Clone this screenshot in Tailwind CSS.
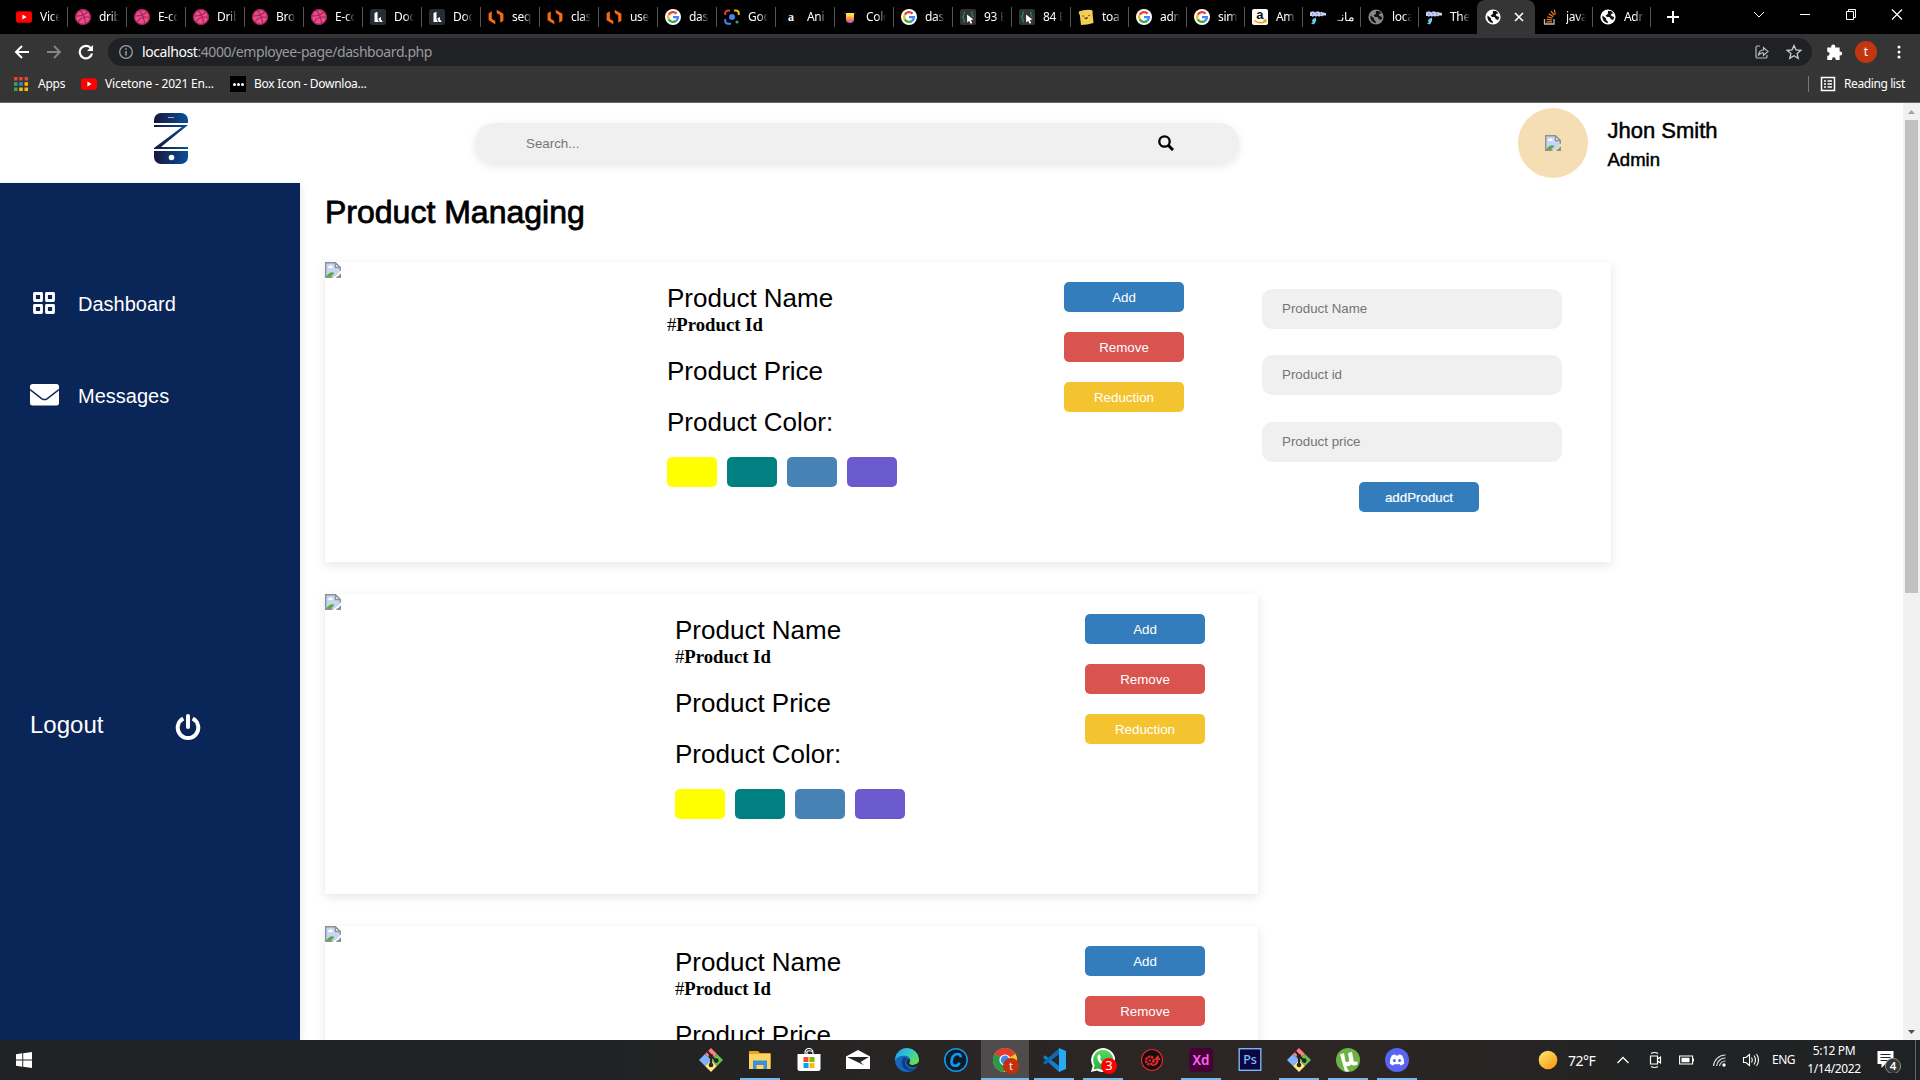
<!DOCTYPE html>
<html lang="en">
<head>
<meta charset="utf-8">
<title>Dashboard</title>
<script src="https://cdn.jsdelivr.net/npm/@tailwindcss/browser@4"></script>
</head>
<body class="w-[1920px] h-[1080px] overflow-hidden bg-white font-['Liberation_Sans',Arial,sans-serif] text-black">
<svg class="absolute size-0">
  <defs>
    <linearGradient id="gz"><stop stop-color="#17173a"/><stop offset="1" stop-color="#0a4f98"/></linearGradient>
    <linearGradient id="gsun" x2="0.8" y2="1"><stop stop-color="#ffe873"/><stop offset="1" stop-color="#fb9a14"/></linearGradient>
    <linearGradient id="gedge" x2="1" y2="0.5"><stop stop-color="#1b9de2"/><stop offset=".5" stop-color="#2fc3d0"/><stop offset="1" stop-color="#5ee05a"/></linearGradient>
    <linearGradient id="gcol" x2="0" y2="1"><stop offset=".2" stop-color="#ffe14d"/><stop offset=".6" stop-color="#ff8a3c"/><stop offset="1" stop-color="#c04bd8"/></linearGradient>
    <linearGradient id="gwa" x2="0" y2="1"><stop stop-color="#5fd668"/><stop offset="1" stop-color="#20b038"/></linearGradient>
  </defs>
</svg>
<svg class="hidden">
  <symbol id="yt" viewBox="0 0 16 16"><rect y="2.3" width="16" height="11.4" rx="2.8" fill="#f00"/><path d="M6.4 5.6v4.8L10.6 8z" fill="#fff"/></symbol>
  <symbol id="dribbble" viewBox="0 0 16 16"><circle cx="8" cy="8" r="7.8" fill="#ea4c89"/><g fill="none" stroke="#a3245a" stroke-width="1.1"><circle cx="8" cy="8" r="7.4"/><path d="M5.2 1.2c3 3.6 4.8 8.200 5.500 13.300M.8 7c5.600.1 9.600-1.200 12-4.400M3 13.200C5.200 9 9.500 7.200 15.200 8.300"/></g></symbol>
  <symbol id="lucid" viewBox="0 0 16 16"><rect width="16" height="16" rx="2.500" fill="#282c33"/><path d="M4.500 4 7.500 2.800V10L9 13H4.500zM8.300 9.500 11 8v2.500l1.800 2.500H9.800z" fill="#fff"/></symbol>
  <symbol id="hexo" viewBox="0 0 16 16"><path d="M3.800 2.300v7.400L7.300 12v3.300L.6 11.300V4.300zM8.700.7l6.700 4v7l-3.200 2V6.300L8.700 4z" fill="#f96b13"/></symbol>
  <symbol id="google" viewBox="0 0 16 16"><circle cx="8" cy="8" r="8" fill="#fff"/><g fill="none" stroke-width="2.300"><path d="M11.600 4.600A4.900 4.900 0 0 0 3.700 5.700" stroke="#ea4335"/><path d="M3.700 5.700a4.900 4.900 0 0 0 0 4.700" stroke="#fbbc05"/><path d="M3.700 10.400a4.900 4.900 0 0 0 7.600 1.200" stroke="#34a853"/><path d="M8 8.200h4.900a4.900 4.900 0 0 1-1.600 3.400" stroke="#4285f4"/></g></symbol>
  <symbol id="lens" viewBox="0 0 16 16"><g fill="none" stroke-width="2"><path d="M1.200 6V4.500a3 3 0 0 1 3-3H6" stroke="#ea4335"/><path d="M10 1.500h1.800a3 3 0 0 1 3 3V6" stroke="#fbbc05"/><path d="M1.200 10v1.800a3 3 0 0 0 3 3H7" stroke="#4285f4"/></g><circle cx="8" cy="8" r="3" fill="#4285f4"/><circle cx="13" cy="13" r="1.600" fill="#34a853"/></symbol>
  <symbol id="letter-a" viewBox="0 0 16 16"><rect width="16" height="16" rx="2" fill="#060606"/><text x="8" y="11.500" text-anchor="middle" font-family="Liberation Serif" font-weight="700" font-size="12" fill="#fff">a</text></symbol>
  <symbol id="colorhunt" viewBox="0 0 16 16"><path d="M2 3.500 4 5M14 3.500 12 5" stroke="#333"/><path d="M4 4h8v6a4 4 0 0 1-8 0z" fill="url(#gcol)"/></symbol>
  <symbol id="codepen" viewBox="0 0 16 16"><rect width="16" height="16" rx="2" fill="#333"/><path d="M5 3c-1.500 0-1 2-1.200 3.500L2.500 8l1.300 1.500C4 11 3.500 13 5 13M11 3c1.500 0 1 2 1.200 3.500L13.500 8" fill="none" stroke="#1e8a4a" stroke-width="1.300"/><path d="M7 5.500l6.500 5-2.700.4 1.400 3-1.600.8-1.400-3L7.200 13.500z" fill="#fff"/></symbol>
  <symbol id="toast" viewBox="0 0 16 16"><path d="M1 2.500Q7 0 13.500 1q2 1 1 3l1 10Q9 16 3 16L1.800 6Q0 4 1 2.500z" fill="#f3cf55"/><path d="M5 7h.1M11 6.500h.1M7 9q1.200 1 2.200-.2" stroke="#5b4316" stroke-width="1.400" stroke-linecap="round" fill="none"/></symbol>
  <symbol id="amazon" viewBox="0 0 16 16"><rect width="16" height="16" rx="2" fill="#fff"/><text x="7.800" y="9.600" text-anchor="middle" font-family="Liberation Sans" font-weight="700" font-size="13" fill="#111">a</text><path d="M2 11.500q5.500 4 11 .8M11.500 11.300l2.500-.1-.6 2.300" fill="none" stroke="#f90" stroke-width="1.400"/></symbol>
  <symbol id="mana" viewBox="0 0 16 16"><path d="M0 3.500 1.500 2.500H4l1 1 1.500-1H9l1 1 1.500-.8L13 3.500l3 .5v2.500h-3l-1 1-1.500-.8L9 7.700 7.500 6.800 6 7.700 4.500 6.800 3 7.700 1.500 7H0z" fill="#ccd3f5"/><path d="M2 5h1.500M6 4.800h1.500M10 5h1.500" stroke="#5566b8"/><path d="M3 10 6 8.500 6 12 4 15.500 1 14.500l2-1.500-1.200-1z" fill="#6fcdf2"/></symbol>
  <symbol id="globe" viewBox="0 0 16 16"><circle cx="8" cy="8" r="7.600" fill="currentColor"/><path d="M2.500 6.500 6 9.300v1.400l1.800 1.800v1.800A6.300 6.300 0 0 1 2.500 6.500zM8 2l3-.1 2.500 2.300-2 .6-.8 1.500 1.800 1.300 1.700.4-1 3-2.200-.8L9.500 8H7L5.500 6.500 7.800 5z" fill="#111"/></symbol>
  <symbol id="so" viewBox="0 0 16 16"><path d="M2.500 10v5h9.500v-5" fill="none" stroke="#bcbbbb" stroke-width="1.300"/><path d="M4.500 12.800h5.500M4.600 10.400l5.400.6M5.200 7.700l5.200 1.600M6.800 4.800l4.500 3M9 2l3.300 4.300M12.300.5l1 5" stroke="#f48024" stroke-width="1.200"/></symbol>
  <symbol id="broken" viewBox="0 0 16 16"><path d="M.7.700h9.800l4.800 4.800v4L9 15.300H.7z" fill="#c5d6f4"/><path d="M1 14.800Q5 8.500 9.500 11l-4 4.300H1z" fill="#5aad3c"/><path d="M12 15.300l3.300-3v3z" fill="#5aad3c"/><path d="M2.500 6q0-1.500 1.700-1.500Q5.500 2 7 4.500 8.500 4.700 8.300 6z" fill="#fff"/><path d="M10.500.7v4.800h4.800z" fill="#fff"/><path d="M7.500 15.300H.7V.7h9.800l4.800 4.800v3.300M10.500.7v4.800h4.800M11.500 15.300h3.800v-3.500" fill="none" stroke="#8f9093" stroke-width="1.400"/></symbol>
  <symbol id="git" viewBox="0 0 24 24"><path d="M12 0l6 6-6 6-6-6z" fill="#ff7f7f"/><path d="M6 6l6 6-6 6-6-6z" fill="#80b3ff"/><path d="M18 6l6 6-6 6-6-6z" fill="#6cc04a"/><path d="M12 12l6 6-6 6-6-6z" fill="#ffe680"/><path d="M8.500 3.500l3.500 4v10M12 8l5.500 5" stroke="#272425" stroke-width="2" fill="none"/><circle cx="12" cy="8.200" r="2.300" fill="#272425"/><circle cx="12" cy="17" r="2.300" fill="#272425"/><circle cx="17.300" cy="12.600" r="2.300" fill="#272425"/></symbol>
  <symbol id="folder" viewBox="0 0 24 24"><path d="M1 3h9l2 2h10.500v16H1z" fill="#e8a317"/><path d="M1 6h21.500v15H1z" fill="#fcd462"/><path d="M5 12.500h14V21h-3.500v-4h-7v4H5z" fill="#3a8fd8"/></symbol>
  <symbol id="store" viewBox="0 0 24 24"><path d="M8 6V4.500a4 4 0 0 1 8 0V6M10 6V3.500a4 3 0 0 1 5 0" fill="none" stroke="#fff" stroke-width="1.200"/><path d="M.5 6h23v14.500a2.500 2.500 0 0 1-2.500 2.500H3a2.500 2.500 0 0 1-2.500-2.500z" fill="#fff"/><path d="M6.500 9H11.500v5H6.500z" fill="#f25022"/><path d="M12.500 9h5v5h-5z" fill="#7fba00"/><path d="M6.500 15h5v5h-5z" fill="#00a4ef"/><path d="M12.500 15h5v5h-5z" fill="#ffb900"/></symbol>
  <symbol id="mail" viewBox="0 0 24 24"><path d="M0 8.500 12 2l12 6.500V21H0z" fill="#fff"/><path d="M1 9h22l-8.500 5 3.500 3.200z" fill="#252324"/></symbol>
  <symbol id="edge" viewBox="0 0 24 24"><circle cx="12" cy="12" r="12" fill="#1469bf"/><path d="M.3 9.500A12 12 0 0 1 24 11.500c0 4-3 5.500-6 5.500s-4.500-1-3.500-2.800c2-3-.5-6.500-5-6.500C5 7.700 2 9 .3 12.500z" fill="url(#gedge)"/><path d="M9.500 9c-3.500 2.500-4 8.500.5 12q5 3.500 11-.5-7 1.500-9.500-2.500c-2.200-3.300-1-6 .8-7z" fill="#0d3f86"/><path d="M12.300 11.500c-1.500 2.500-.5 5 1.500 6.500 3 2 7 1.500 9.200-.8L24 14q-2.500 3-6 3c-3 0-4.500-1-3.500-2.800.6-1 .4-2.200-.2-3.200z" fill="#252324"/></symbol>
  <symbol id="cc" viewBox="0 0 24 24"><circle cx="12" cy="12" r="11.200" fill="#0c1d29" stroke="#0d9cf0" stroke-width="1.500"/><path d="M16.800 9.300q0-3.300-3.500-3.300c-3.800 0-5.800 4-5.800 7.500 0 3.200 1.700 4.300 3.800 4.300 2.200 0 3.500-1 4.200-3" fill="none" stroke="#0d9cf0" stroke-width="2.600"/></symbol>
  <symbol id="chrome" viewBox="0 0 24 24"><circle cx="12" cy="12" r="12" fill="#fbc116"/><path d="M12 12 1.600 6A12 12 0 0 1 22.400 6z" fill="#e33b2e"/><path d="M1.600 6A12 12 0 0 0 11 24l5-9.500-4-2.500z" fill="#269a49"/><path d="M22.400 6A12 12 0 0 1 11 24l6-9.500z" fill="#fbc116"/><circle cx="12" cy="12" r="5.600" fill="#fff"/><circle cx="12" cy="12" r="4.400" fill="#4285f4"/></symbol>
  <symbol id="vsc" viewBox="0 0 24 24"><path d="M17 0v24L1 9.500 3 7.300 17 17.700z" fill="#1080c8"/><path d="M17.500 0 1 14.500 3 16.700 17.500 6z" fill="#0a6db0"/><path d="M17 0l7 3v18l-7 3z" fill="#29aaf2"/></symbol>
  <symbol id="wa" viewBox="0 0 24 24"><path d="M0 24l1.700-6A12 12 0 1 1 6 22.400z" fill="#fff"/><path d="M2.500 21.500l1.200-4.300a10 10 0 1 1 3.300 3.200z" fill="url(#gwa)"/><path d="M8.500 6.300 10 9.500 9 11q1.500 3 4.500 4.200l1.300-1.500 3 1.500q-.3 3-3.600 2.800C9.500 17 6 12.500 6.500 8.500q.5-2 2-2.200z" fill="#fff"/></symbol>
  <symbol id="gear" viewBox="0 0 24 24"><circle cx="12" cy="12" r="10.500" fill="#130f10" stroke="#e0262c" stroke-width="1.200"/><circle cx="9.800" cy="12.500" r="3.800" fill="none" stroke="#e0262c" stroke-width="2.600" stroke-dasharray="2.400 .7"/><circle cx="9.800" cy="12.500" r="1.200" fill="#e0262c"/><path d="M12 16.500q4 0 4.300-4.500H14l3.800-5 3 5h-2.300q0 6-6.500 6z" fill="#e0262c"/></symbol>
  <symbol id="xd" viewBox="0 0 24 24"><rect width="24" height="24" rx="4" fill="#470137"/><text x="12" y="16.500" text-anchor="middle" font-family="Noto Sans" font-weight="600" font-size="13.500" fill="#ff61f6">Xd</text></symbol>
  <symbol id="ps" viewBox="0 0 24 24"><rect x="1.200" y=".7" width="21.600" height="21.600" fill="#0c0541" stroke="#74b8f8" stroke-width="1.400"/><text x="12" y="16" text-anchor="middle" font-family="Noto Sans" font-weight="500" font-size="12.500" fill="#7cc0ff">Ps</text></symbol>
  <symbol id="ut" viewBox="0 0 24 24"><circle cx="12" cy="12" r="12" fill="#6db344"/><path d="M4 6.500 8 5l1.300 7.500c.5 2.500 4.200 2 3.800-1L12 5l4-1.300 1.500 8.500q.5 2 2.500 1.500l1.500-.3v3q-4 2-6 0-2.500 2.500-5.500 1.500l3 5.500H9z" fill="#fff"/></symbol>
  <symbol id="dc" viewBox="0 0 24 24"><circle cx="12" cy="12" r="12" fill="#5865f2"/><path d="M6.800 7.500Q9 6.300 10.200 6.500l.5.900h2.600l.5-.9q1.200-.2 3.400 1 2.200 3.500 2 8-1.500 1.600-3.700 1.900l-.9-1.400q-2.600.7-5.200 0l-.9 1.400q-2.200-.3-3.700-1.900-.2-4.500 2-8z" fill="#fff"/><circle cx="9.400" cy="12.500" r="1.500" fill="#5865f2"/><circle cx="14.600" cy="12.500" r="1.500" fill="#5865f2"/></symbol>
</svg>

<div class="flex flex-col w-[1920px] h-[1080px]">
  <!-- Tab strip -->
  <div class="flex h-[34px] shrink-0 bg-black pl-[9px] font-['Noto_Sans',sans-serif] text-[12px] text-white">
    <div id="tabs" class="flex"></div>
    <svg class="ml-3.5 mt-[9px] size-4" viewBox="0 0 16 16"><path d="M8 2v12M2 8h12" stroke="#fff" stroke-width="2"/></svg>
    <div class="ml-auto flex pr-[15px] pt-[7px] gap-[30px] text-white">
      <svg class="size-4" viewBox="0 0 16 16"><path d="M3 5l5 5 5-5" fill="none" stroke="#fff"/></svg>
      <svg class="size-4" viewBox="0 0 16 16"><path d="M3 7.500h10" stroke="#fff"/></svg>
      <svg class="size-4" viewBox="0 0 16 16"><path d="M3.500 4.500h7v8h-7zM5.500 4.500v-2h7v8h-2" fill="none" stroke="#fff"/></svg>
      <svg class="size-4" viewBox="0 0 16 16"><path d="M3 2.500l10 10M13 2.500l-10 10" stroke="#fff" stroke-width="1.200"/></svg>
    </div>
  </div>
  <!-- Toolbar -->
  <div class="flex h-[34px] shrink-0 items-center bg-[#353535] pl-[14px] pr-[14px] pt-0.5 font-['Noto_Sans',sans-serif]">
    <svg class="size-4 mr-4" viewBox="0 0 16 16"><path d="M15 8H2M8 2L2 8l6 6" fill="none" stroke="#fff" stroke-width="2"/></svg>
    <svg class="size-4 mr-4" viewBox="0 0 16 16"><path d="M1 8h13M8 2l6 6-6 6" fill="none" stroke="#858585" stroke-width="1.800"/></svg>
    <svg class="size-4 mr-[14px]" viewBox="0 0 16 16"><path d="M13 4.500A6.200 6.200 0 1 0 14 9.500" fill="none" stroke="#fff" stroke-width="2.200"/><path d="M15 1v6H9z" fill="#fff"/></svg>
    <div class="flex h-7 w-[1704px] items-center rounded-full bg-[#202124] pl-[10px] pr-[10px]">
      <svg class="size-4 mr-2" viewBox="0 0 16 16"><circle cx="8" cy="8" r="6.300" fill="none" stroke="#9aa0a6" stroke-width="1.300"/><path d="M8 7v4.500M8 4.300v1.500" stroke="#9aa0a6" stroke-width="1.500"/></svg>
      <span class="text-[14px] leading-5 text-[#9a9a9a] tracking-[-0.42px]"><span class="text-white">localhost</span>:4000/employee-page/dashboard.php</span>
      <svg class="ml-auto size-4" viewBox="0 0 16 16"><path d="M6 2H3.500A1.500 1.500 0 0 0 2 3.500v9A1.500 1.500 0 0 0 3.500 14h8a1.500 1.500 0 0 0 1.500-1.500V11M4.500 11q.5-5 5-5V3.500L14 7.500l-4.500 4V9q-3-.3-5 2z" fill="none" stroke="#bbb" stroke-width="1.200"/></svg>
      <svg class="ml-4 size-4" viewBox="0 0 16 16"><path d="M8 1.500l2 4.500 4.800.4-3.700 3.200 1.200 4.800L8 11.800l-4.300 2.600 1.200-4.800L1.200 6.400 6 6z" fill="none" stroke="#ccc" stroke-width="1.300"/></svg>
    </div>
    <svg class="ml-[13px] size-[18px]" viewBox="0 0 16 16"><path d="M2 4h3.500V3.200a1.800 1.800 0 0 1 3.600 0V4H13v3.500h.5a1.800 1.800 0 0 1 0 3.600H13V15H9.500v-.8a1.600 1.600 0 0 0-3.200 0v.8H2v-3.700h.8a1.700 1.700 0 0 0 0-3.300H2z" fill="#fff"/></svg>
    <div class="ml-3 flex size-[22px] items-center justify-center rounded-full bg-[#c2370f] text-[12px] text-white">t</div>
    <svg class="ml-auto size-4" viewBox="0 0 16 16"><path d="M9 3h.01M9 8h.01M9 13h.01" stroke="#fff" stroke-width="3" stroke-linecap="round"/></svg>
  </div>
  <!-- Bookmarks -->
  <div class="flex h-[35px] shrink-0 items-center border-b border-[#666] bg-[#353535] px-[14px] pb-0.5 font-['Noto_Sans',sans-serif] text-[12px] tracking-[-0.25px] text-white">
    <svg class="size-[14px]" viewBox="0 0 14 14"><path d="M0 0h3.500v3.500H0zM5.200 0h3.500v3.500H5.200zM10.500 0H14v3.500h-3.500z" fill="#ea4335"/><path d="M0 5.200h3.500v3.500H0zM0 10.500h3.500V14H0z" fill="#34a853"/><path d="M5.200 5.200h3.500v3.500H5.200z" fill="#2f86f6"/><path d="M10.500 5.200H14v3.500h-3.500zM5.200 10.500h3.500V14H5.200zM10.500 10.500H14V14h-3.500z" fill="#fbbc05"/></svg>
    <span class="ml-[10px] w-[28px] whitespace-nowrap">Apps</span>
    <svg class="ml-[15px] size-4"><use href="#yt"/></svg>
    <span class="ml-2 w-[109px] whitespace-nowrap tracking-[-0.2px]">Vicetone - 2021 En...</span>
    <span class="ml-4 flex size-4 items-center justify-center gap-px bg-black"><i class="size-[3px] rounded-full bg-white"></i><i class="size-[3px] rounded-full bg-white"></i><i class="size-[3px] rounded-full bg-white"></i></span>
    <span class="ml-2 whitespace-nowrap tracking-[-0.28px]">Box Icon - Downloa...</span>
    <span class="ml-auto h-4 w-px bg-[#777]"></span>
    <svg class="ml-[11px] size-4" viewBox="0 0 16 16"><path d="M1.500 1.500h13v13h-13zM4 5h2M4 8h2M4 11h2M7.500 5H12M7.500 8H12M7.500 11H12" fill="none" stroke="#fff" stroke-width="1.500"/></svg>
    <span class="ml-2 w-[62px] whitespace-nowrap tracking-[-0.4px]">Reading list</span>
  </div>

  <!-- Page viewport -->
  <div class="flex h-[937px] shrink-0 overflow-hidden">
    <div class="flex w-[1903px] flex-col bg-white">
      <header class="flex h-20 shrink-0 items-center">
        <div class="w-[475px] shrink-0 pl-[153px] pb-2">
          <svg class="h-[52px] w-9" viewBox="0 0 36 52"><path d="M1 10V7a7 7 0 0 1 7-7h20a7 7 0 0 1 7 7v3zM1 38h34v6a7 7 0 0 1-7 7H8a7 7 0 0 1-7-7z" fill="url(#gz)"/><path d="M1 12h34L8 34h27v2H1v-1L29 14H1z" fill="url(#gz)"/><path d="M15 4.500h6" stroke="#aab"/><circle cx="18.500" cy="44.500" r="2.800" fill="#fff"/></svg>
        </div>
        <div class="flex h-10 w-[764px] shrink-0 items-center rounded-full bg-[#f0f0f0] pl-[51px] pr-[65px] shadow-[0_3px_10px_rgba(0,0,0,0.1)]">
          <span class="pt-0.5 text-[13.33px] text-[#757575]">Search...</span>
          <svg class="ml-auto size-4" viewBox="0 0 16 16"><circle cx="6.500" cy="6.500" r="5.200" fill="none" stroke="#000" stroke-width="2.300"/><path d="M10 10l5 5" stroke="#000" stroke-width="3"/></svg>
        </div>
        <div class="ml-[279px] flex size-[70px] items-center justify-center rounded-full bg-[#f5deb3]"><svg class="size-4"><use href="#broken"/></svg></div>
        <div class="ml-[19.5px] [-webkit-text-stroke:0.5px]">
          <div class="mt-1 text-[22px] leading-[28px]">Jhon Smith</div>
          <div class="text-[18.5px] leading-[29px]">Admin</div>
        </div>
      </header>
      <div class="flex h-[857px] shrink-0">
        <aside class="w-[300px] shrink-0 bg-[#0a2558] text-white shadow-[0_3px_10px_rgba(0,0,0,0.1)]">
          <div class="mt-[106px] flex h-7 items-center pl-[30px] text-[20px]">
            <svg class="w-7 h-6 mr-5" viewBox="0 0 28 24"><path d="M4.500 2.500h7v7h-7zM16.500 2.500h7v7h-7zM4.500 14.500h7v7h-7zM16.500 14.500h7v7h-7z" fill="none" stroke="#fff" stroke-width="2.800" stroke-linejoin="round"/></svg>
            <span class="pt-0.5">Dashboard</span>
          </div>
          <div class="mt-16 flex h-7 items-center pl-[30px] text-[20px]">
            <svg class="w-[29px] h-[22px] mr-[19px]" viewBox="0 0 29 22"><rect width="29" height="21.500" rx="2.500" fill="#fff"/><path d="M0 5.500l12 9.300q2.500 1.500 5 0L29 5.500" fill="none" stroke="#0a2558" stroke-width="1.400"/></svg>
            <span class="pt-px">Messages</span>
          </div>
          <div class="mt-[302px] flex h-7 items-center pl-[30px] text-[24px]">
            <span class="w-[145px]">Logout</span>
            <svg class="mt-1 size-[26px]" viewBox="0 0 26 26"><path d="M8.300 4.500a10.300 10.300 0 1 0 9.400 0" fill="none" stroke="#fff" stroke-width="4"/><path d="M13 2v11" stroke="#fff" stroke-width="4" stroke-linecap="round"/></svg>
          </div>
        </aside>
        <main class="flex flex-col pl-[25px] pt-[10px]">
          <h1 class="h-[69px] shrink-0 text-[32px] leading-[38px] [-webkit-text-stroke:0.8px]">Product Managing</h1>
          <div id="cards" class="flex flex-col gap-8"></div>
        </main>
      </div>
    </div>
    <!-- Scrollbar -->
    <div class="flex w-[17px] flex-col items-center bg-[#f1f1f1]">
      <svg class="h-[17px] w-[17px] shrink-0" viewBox="0 0 17 17"><path d="M5 11l3.500-4L12 11z" fill="#a3a3a3"/></svg>
      <div class="h-[473px] w-[13px] bg-[#c1c1c1]"></div>
      <svg class="mt-auto h-[17px] w-[17px] shrink-0" viewBox="0 0 17 17"><path d="M5 7l3.500 4L12 7z" fill="#505050"/></svg>
    </div>
  </div>

  <!-- Taskbar -->
  <footer class="flex h-10 shrink-0 bg-[linear-gradient(90deg,#1f2123_0%,#202223_30%,#2a2524_50%,#2d2625_70%,#222324_85%,#1f2123_100%)] font-['Noto_Sans',sans-serif] text-[12px] text-white">
    <div class="flex w-[687px] shrink-0 items-center pl-4">
      <svg class="size-4" viewBox="0 0 16 16"><path d="M0 2.200l6.300-.9v6.200H0zM7.200 1.200 16 0v7.500H7.200zM0 8.400h6.300v6.300L0 13.800zM7.200 8.400H16V16l-8.800-1.200z" fill="#fff"/></svg>
    </div>
    <div id="tasks" class="flex"></div>
    <div class="ml-auto flex items-center">
      <svg class="size-5 mr-[10px]" viewBox="0 0 20 20"><circle cx="10" cy="10" r="9.300" fill="url(#gsun)"/></svg>
      <span class="w-[48px] text-[14px] tracking-[-0.5px]">72°F</span>
      <svg class="w-[14px] h-4 mr-[18px]" viewBox="0 0 14 16"><path d="M1.500 11 7 5.500l5.500 5.500" fill="none" stroke="#fff" stroke-width="1.300"/></svg>
      <svg class="w-4 h-[18px] mr-[15px]" viewBox="0 0 16 18"><path d="M2.500 5h7v8h-7zM9.500 8l3-2v6l-3-2M3 2.500q3.500-2 7 0M3 15.500q3.500 2 7 0" fill="none" stroke="#fff" stroke-width="1.200"/></svg>
      <svg class="w-4 h-4 mr-[17px]" viewBox="0 0 16 16"><path d="M.6 4h13v8H.6z" fill="none" stroke="#fff" stroke-width="1.100"/><path d="M2.500 5.700h8v4.600h-8zM13.600 6.500H15v3h-1.400z" fill="#fff"/></svg>
      <svg class="size-4 mr-[14px]" viewBox="0 0 16 16"><g fill="none" stroke="#ddd" stroke-width="1.200"><path d="M1.500 14A12 12 0 0 1 13.500 3M4.500 14a9 9 0 0 1 9-8M7.500 14a6 6 0 0 1 6-5"/></g><circle cx="12" cy="13" r="1.700" fill="#fff"/></svg>
      <svg class="w-[18px] h-4 mr-[12px]" viewBox="0 0 18 16"><path d="M1.500 5.500h2.500l3.500-3v11L4 10.500H1.500zM9.500 5.500q1.500 2.500 0 5M12 3.500q3 4.500 0 9M14.500 2q4 6 0 12" fill="none" stroke="#fff" stroke-width="1.100"/></svg>
      <span class="w-[33px] tracking-[-0.5px]">ENG</span>
      <div class="w-[58px] whitespace-nowrap text-center leading-[18px] tracking-[-0.4px]"><div>5:12 PM</div><div>1/14/2022</div></div>
      <svg class="ml-[14px] h-[26px] w-[26px]" viewBox="0 0 26 26"><path d="M.5 4h16v13h-8l-4 4v-4h-4z" fill="#fff"/><path d="M3.500 7.500h10M3.500 10.500h10M3.500 13.500h7" stroke="#222" stroke-width="1.200"/><circle cx="16" cy="19" r="7.600" fill="#333536" stroke="#8a8a8a"/><text x="16" y="23" text-anchor="middle" font-size="11.500" font-weight="600" fill="#fff">4</text></svg>
      <span class="ml-[12px] mr-1 h-10 w-px bg-[#666]"></span>
    </div>
  </footer>
</div>

<script>
  const tabs = [
    ['yt','Vice'],['dribbble','drib'],['dribbble','E-co'],['dribbble','Drib'],['dribbble','Bro'],['dribbble','E-co'],
    ['lucid','Doc'],['lucid','Doc'],['hexo','seq'],['hexo','clas'],['hexo','use'],['google','das'],['lens','Goo'],
    ['letter-a','Ani'],['colorhunt','Colo'],['google','das'],['codepen','93 E'],['codepen','84 E'],['toast','toa'],
    ['google','adm'],['google','sim'],['amazon','Am'],['mana','مانـ'],['globe','loca'],['mana','The'],['globe',''],
    ['so','java'],['globe','Adm']
  ];
  document.getElementById('tabs').innerHTML = tabs.map(([icon, text], i) => {
    const width = i < 18 ? 'w-[59px]' : 'w-[58px]';
    if (i === 25) return `<div class="flex ${width} h-[34px] items-center rounded-t-lg bg-[#353535] pl-2">
      <svg class="size-4 shrink-0 text-white"><use href="#globe"/></svg>
      <svg class="ml-[13px] size-2.5" viewBox="0 0 10 10"><path d="M1 1l8 8M9 1l-8 8" stroke="#fff" stroke-width="1.600"/></svg></div>`;
    const tint = i === 23 ? 'text-[#888]' : 'text-white';
    const rtl = text[0] === 'م';
    const label = rtl
      ? `<span dir="rtl" class="ml-2 w-5 overflow-hidden whitespace-nowrap [mask-image:linear-gradient(270deg,#000_60%,transparent)]">${text}</span>`
      : `<span class="ml-2 w-5 overflow-hidden whitespace-nowrap tracking-[-0.3px] [mask-image:linear-gradient(90deg,#000_55%,transparent)]">${text}</span>`;
    const line = i === 24 ? 'bg-transparent' : 'bg-[#555]';
    return `<div class="flex ${width} h-[34px] items-center pl-[7px]">
      <svg class="size-4 shrink-0 ${tint}"><use href="#${icon}"/></svg>${label}
      <span class="ml-auto h-5 w-px ${line}"></span></div>`;
  }).join('');

  const button = (label, color) => `<button class="h-[30px] w-[120px] rounded-[5px] pt-0.5 ${color} text-[13.33px] text-white">${label}</button>`;
  const field = label => `<div class="flex h-10 w-[300px] items-center rounded-[10px] bg-[#f0f0f0] pl-5 text-[13.33px] text-[#757575]">${label}</div>`;
  const card = wide => `<section class="flex h-[300px] shrink-0 ${wide ? 'w-[1286px]' : 'w-[933px]'} bg-white shadow-[0_3px_10px_rgba(0,0,0,0.1)]">
    <div class="${wide ? 'w-[342px]' : 'w-[350px]'} shrink-0"><svg class="size-4"><use href="#broken"/></svg></div>
    <div class="${wide ? 'w-[397px]' : 'w-[410px]'} shrink-0 pt-[21px] text-[26px] leading-[30px]">
      <div>Product Name</div>
      <div class="h-[22px] font-['Liberation_Serif',serif] text-[18.72px] leading-[24px]">#<b>Product Id</b></div>
      <div class="mt-[21px]">Product Price</div>
      <div class="mt-[21px]">Product Color:</div>
      <div class="mt-5 flex gap-2.5">
        <i class="h-[30px] w-[50px] rounded-[5px] bg-[#ffff00]"></i><i class="h-[30px] w-[50px] rounded-[5px] bg-[#008080]"></i>
        <i class="h-[30px] w-[50px] rounded-[5px] bg-[#4682b4]"></i><i class="h-[30px] w-[50px] rounded-[5px] bg-[#6a5acd]"></i>
      </div>
    </div>
    <div class="flex flex-col gap-5 pt-5">${button('Add', 'bg-[#337dbd]')}${button('Remove', 'bg-[#d9534f]')}${button('Reduction', 'bg-[#f4c430]')}</div>
    ${wide ? `<div class="ml-[78px] flex w-[300px] flex-col pt-[27px]">${field('Product Name')}
      <div class="mt-[26px]">${field('Product id')}</div><div class="mt-[27px]">${field('Product price')}</div>
      <div class="mt-5 pl-[97px] [-webkit-text-stroke:0.2px]">${button('addProduct', 'bg-[#337dbd]')}</div></div>` : ''}
  </section>`;
  document.getElementById('cards').innerHTML = card(true) + card(false) + card(false);

  const apps = [['git',0],['folder',1],['store',0],['mail',0],['edge',0],['cc',0],['chrome',2],['vsc',1],['wa',1],['gear',0],['xd',1],['ps',0],['git',1],['ut',1],['dc',1]];
  document.getElementById('tasks').innerHTML = apps.map(([icon, state]) => {
    const badge = icon === 'chrome' ? '<span class="absolute left-[22px] top-[18px] flex size-4 items-center justify-center rounded-full bg-[#c5300c] text-[10px]">t</span>'
      : icon === 'wa' ? '<span class="absolute left-[22px] top-[18px] flex size-4 items-center justify-center rounded-full bg-[#f00] text-[13px]">3</span>' : '';
    const bar = state === 2 ? 'w-12' : state === 1 ? 'w-10' : 'w-0';
    return `<div class="w-[49px]"><div class="relative flex h-10 w-12 flex-col items-center ${state === 2 ? 'bg-[#4e4c4c]' : ''}">
      <svg class="mt-2 size-6"><use href="#${icon}"/></svg><span class="mt-auto h-0.5 bg-[#76b9ed] ${bar}"></span>${badge}</div></div>`;
  }).join('');
</script>
</body>
</html>
